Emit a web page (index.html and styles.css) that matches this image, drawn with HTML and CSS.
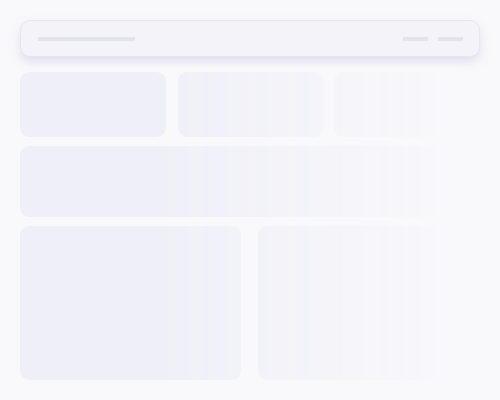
FILE: index.html
```html
<!DOCTYPE html>
<html>
<head>
<meta charset="utf-8">
<link rel="stylesheet" href="styles.css">
</head>
<body>
<div class="page">
  <div class="header">
    <div class="line line-long"></div>
    <div class="header-right">
      <div class="line line-short"></div>
      <div class="line line-short"></div>
    </div>
  </div>
  <div class="content">
    <div class="row row-three">
      <div class="card"></div>
      <div class="card"></div>
      <div class="card"></div>
    </div>
    <div class="row">
      <div class="card card-wide"></div>
    </div>
    <div class="row row-two">
      <div class="card card-tall"></div>
      <div class="card card-tall"></div>
    </div>
  </div>
</div>
</body>
</html>
```
FILE: styles.css
```css
html, body {
  margin: 0;
  padding: 0;
  background: #f9f9fc;
  font-family: "Liberation Sans", Arial, sans-serif;
}
.page {
  width: 460px;
  padding: 20px 20px 0 20px;
  display: flex;
  flex-direction: column;
}
.header {
  height: 37px;
  box-sizing: border-box;
  border: 1px solid #e6e6f1;
  border-radius: 10px;
  background: #f3f3f9;
  box-shadow: 0 5px 10px rgba(200, 200, 225, 0.5);
  display: flex;
  align-items: center;
  justify-content: space-between;
  padding: 0 16px 0 17px;
}
.header-right {
  display: flex;
  gap: 10px;
}
.line {
  height: 4px;
  background: #e3e3ee;
}
.line-long { width: 97px; }
.line-short { width: 25px; }
.content {
  margin-top: 15px;
  display: flex;
  flex-direction: column;
  gap: 9px;
  -webkit-mask-image: linear-gradient(to right, #000 0%, #000 30%, rgba(0,0,0,0.5) 65%, rgba(0,0,0,0) 92%);
  mask-image: linear-gradient(to right, #000 0%, #000 30%, rgba(0,0,0,0.5) 65%, rgba(0,0,0,0) 92%);
}
.row {
  display: grid;
  grid-template-columns: 1fr;
}
.row-three {
  grid-template-columns: 146px 145px 146px;
  column-gap: 11.5px;
}
.row-two {
  grid-template-columns: 221px 222px;
  column-gap: 17px;
}
.card {
  height: 65px;
  border-radius: 9px;
  background: #efeff7;
}
.card-wide { height: 71px; }
.card-tall { height: 154px; }
```
